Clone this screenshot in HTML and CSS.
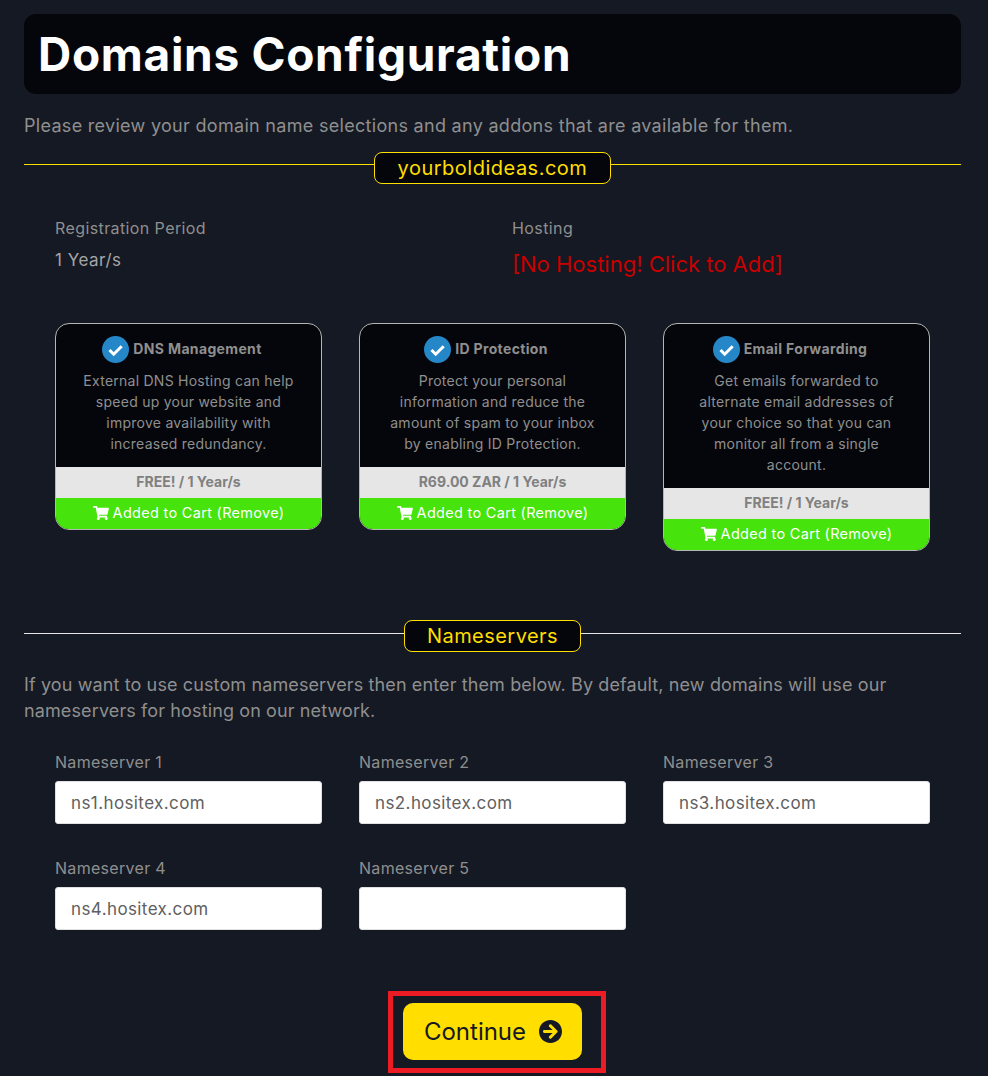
FILE: index.html
```html
<!DOCTYPE html>
<html lang="en">
<head>
    <meta charset="UTF-8">
    <meta name="viewport" content="width=device-width, initial-scale=1.0">
    <title>Domains Configuration</title>
    <link rel="stylesheet" href="styles.css">
</head>
<body>

<div class="container">
    <div class="page-header">
        <h1>Domains Configuration</h1>
    </div>
    <p class="intro">Please review your domain name selections and any addons that are available for them.</p>

    <div class="divider">
        <span class="divider-line"></span>
        <span class="divider-pill">yourboldideas.com</span>
        <span class="divider-line"></span>
    </div>

    <div class="domain-info">
        <div>
            <div class="info-label">Registration Period</div>
            <div class="info-value">1 Year/s</div>
        </div>
        <div>
            <div class="info-label">Hosting</div>
            <a class="no-hosting" href="#">[No Hosting! Click to Add]</a>
        </div>
    </div>

    <div class="addons">
        <div class="addon">
            <div class="addon-body">
                <div class="addon-title">
                    <svg class="check-icon" viewBox="0 0 27 27"><circle cx="13.5" cy="13.5" r="13.5"/><path d="M7.5 14l4.2 4.2 8-8"/></svg>
                    DNS Management
                </div>
                <p>External DNS Hosting can help speed up your website and improve availability with increased redundancy.</p>
            </div>
            <div class="addon-price">FREE! / 1 Year/s</div>
            <a class="addon-btn" href="#">
                <svg class="cart-icon" viewBox="0 0 576 512"><path d="M528.12 301.319l47.273-208C578.806 78.301 567.391 64 551.99 64H159.208l-9.166-44.81C147.758 8.021 137.93 0 126.529 0H24C10.745 0 0 10.745 0 24v16c0 13.255 10.745 24 24 24h69.883l70.248 343.435C147.325 417.1 136 435.222 136 456c0 30.928 25.072 56 56 56s56-25.072 56-56c0-15.674-6.447-29.835-16.824-40h209.647C430.447 426.165 424 440.326 424 456c0 30.928 25.072 56 56 56s56-25.072 56-56c0-22.172-12.888-41.332-31.579-50.405l5.517-24.276c3.413-15.018-8.002-29.319-23.403-29.319H218.117l-6.545-32h293.145c11.206 0 20.92-7.754 23.403-18.681z"/></svg>
                Added to Cart (Remove)
            </a>
        </div>
        <div class="addon">
            <div class="addon-body">
                <div class="addon-title">
                    <svg class="check-icon" viewBox="0 0 27 27"><circle cx="13.5" cy="13.5" r="13.5"/><path d="M7.5 14l4.2 4.2 8-8"/></svg>
                    ID Protection
                </div>
                <p>Protect your personal information and reduce the amount of spam to your inbox by enabling ID Protection.</p>
            </div>
            <div class="addon-price">R69.00 ZAR / 1 Year/s</div>
            <a class="addon-btn" href="#">
                <svg class="cart-icon" viewBox="0 0 576 512"><path d="M528.12 301.319l47.273-208C578.806 78.301 567.391 64 551.99 64H159.208l-9.166-44.81C147.758 8.021 137.93 0 126.529 0H24C10.745 0 0 10.745 0 24v16c0 13.255 10.745 24 24 24h69.883l70.248 343.435C147.325 417.1 136 435.222 136 456c0 30.928 25.072 56 56 56s56-25.072 56-56c0-15.674-6.447-29.835-16.824-40h209.647C430.447 426.165 424 440.326 424 456c0 30.928 25.072 56 56 56s56-25.072 56-56c0-22.172-12.888-41.332-31.579-50.405l5.517-24.276c3.413-15.018-8.002-29.319-23.403-29.319H218.117l-6.545-32h293.145c11.206 0 20.92-7.754 23.403-18.681z"/></svg>
                Added to Cart (Remove)
            </a>
        </div>
        <div class="addon">
            <div class="addon-body">
                <div class="addon-title">
                    <svg class="check-icon" viewBox="0 0 27 27"><circle cx="13.5" cy="13.5" r="13.5"/><path d="M7.5 14l4.2 4.2 8-8"/></svg>
                    Email Forwarding
                </div>
                <p>Get emails forwarded to alternate email addresses of your choice so that you can monitor all from a single account.</p>
            </div>
            <div class="addon-price">FREE! / 1 Year/s</div>
            <a class="addon-btn" href="#">
                <svg class="cart-icon" viewBox="0 0 576 512"><path d="M528.12 301.319l47.273-208C578.806 78.301 567.391 64 551.99 64H159.208l-9.166-44.81C147.758 8.021 137.93 0 126.529 0H24C10.745 0 0 10.745 0 24v16c0 13.255 10.745 24 24 24h69.883l70.248 343.435C147.325 417.1 136 435.222 136 456c0 30.928 25.072 56 56 56s56-25.072 56-56c0-15.674-6.447-29.835-16.824-40h209.647C430.447 426.165 424 440.326 424 456c0 30.928 25.072 56 56 56s56-25.072 56-56c0-22.172-12.888-41.332-31.579-50.405l5.517-24.276c3.413-15.018-8.002-29.319-23.403-29.319H218.117l-6.545-32h293.145c11.206 0 20.92-7.754 23.403-18.681z"/></svg>
                Added to Cart (Remove)
            </a>
        </div>
    </div>

    <div class="divider divider-ns">
        <span class="divider-line"></span>
        <span class="divider-pill">Nameservers</span>
        <span class="divider-line"></span>
    </div>
    <p class="ns-intro">If you want to use custom nameservers then enter them below. By default, new domains will use our nameservers for hosting on our network.</p>

    <div class="ns-grid">
        <div class="ns-field">
            <label for="ns1">Nameserver 1</label>
            <input type="text" id="ns1" value="ns1.hositex.com">
        </div>
        <div class="ns-field">
            <label for="ns2">Nameserver 2</label>
            <input type="text" id="ns2" value="ns2.hositex.com">
        </div>
        <div class="ns-field">
            <label for="ns3">Nameserver 3</label>
            <input type="text" id="ns3" value="ns3.hositex.com">
        </div>
        <div class="ns-field">
            <label for="ns4">Nameserver 4</label>
            <input type="text" id="ns4" value="ns4.hositex.com">
        </div>
        <div class="ns-field">
            <label for="ns5">Nameserver 5</label>
            <input type="text" id="ns5">
        </div>
    </div>

    <div class="actions">
        <div class="highlight">
            <button class="continue-btn">
                Continue
                <svg class="arrow-icon" viewBox="8 8 496 496"><path d="M256 8c137 0 248 111 248 248S393 504 256 504 8 393 8 256 119 8 256 8zm-28.900 143.600l75.500 72.400H120c-13.300 0-24 10.700-24 24v16c0 13.300 10.700 24 24 24h182.600l-75.500 72.400c-9.700 9.300-9.900 24.800-.4 34.300l11 10.900c9.400 9.400 24.600 9.400 33.900 0L404.300 273c9.400-9.400 9.400-24.600 0-33.900L271.600 106.300c-9.400-9.400-24.600-9.400-33.900 0l-11 10.900c-9.500 9.600-9.300 25.100.4 34.400z"/></svg>
            </button>
        </div>
    </div>
</div>

</body>
</html>
```

FILE: styles.css
```css
* {
    box-sizing: border-box;
}
html, body {
    height: 1076px;
    overflow: hidden;
}
body {
    margin: 0;
    font-family: Inter, "Noto Sans", sans-serif;
    background-color: #151923;
    color: #8f8f8f;
}
.container {
    width: 937px;
    margin-left: 24px;
    padding-top: 14px;
}
.page-header {
    height: 80px;
    background-color: #05060b;
    border-radius: 12px;
    padding: 0 14px;
    display: flex;
    align-items: center;
}
h1 {
    margin: 0;
    font-size: 46px;
    font-weight: 700;
    letter-spacing: .7px;
    color: white;
}
.intro {
    margin: 21px 0 0;
    font-size: 18px;
    line-height: 22px;
    letter-spacing: .3px;
}

/* section dividers */
.divider {
    display: flex;
    align-items: flex-start;
    margin-top: 15px;
}
.divider-line {
    flex: 1;
    height: 1px;
    margin-top: 12px;
    background-color: #ffde00;
}
.divider-pill {
    height: 32px;
    padding: 0 22px;
    display: flex;
    align-items: center;
    font-size: 20px;
    letter-spacing: .45px;
    color: #ffde00;
    background-color: #05060b;
    border: 1px solid #ffde00;
    border-radius: 8px;
}
.divider:not(.divider-ns) .divider-pill {
    padding: 0 23px;
    letter-spacing: .5px;
}
.divider-ns {
    margin-top: 69px;
}
.divider-ns .divider-line {
    margin-top: 13px;
    background-color: #e6e6e6;
}

/* registration + hosting */
.domain-info {
    display: grid;
    grid-template-columns: 457px 1fr;
    padding: 0 31px;
    margin-top: 32px;
}
.info-label {
    font-size: 16px;
    line-height: 24px;
    letter-spacing: .4px;
}
.info-value {
    margin-top: 8px;
    font-size: 17px;
    line-height: 24px;
    letter-spacing: .5px;
    color: #a5a5a5;
}
.no-hosting {
    display: block;
    margin-top: 8px;
    font-size: 22px;
    line-height: 32px;
    color: #c80000;
    text-decoration: none;
}

/* addon cards */
.addons {
    display: grid;
    grid-template-columns: repeat(3, 267px);
    column-gap: 37px;
    align-items: start;
    padding: 0 31px;
    margin-top: 43px;
}
.addon {
    border: 1px solid #b5b5b5;
    border-radius: 14px;
    overflow: hidden;
    background-color: #05060b;
}
.addon-body {
    padding: 12px 21px 13px;
    text-align: center;
}
.addon-title {
    display: flex;
    justify-content: center;
    align-items: flex-start;
    gap: 4px;
    height: 27px;
    padding-right: 13px;
    font-size: 14px;
    font-weight: 700;
    line-height: 25px;
    letter-spacing: .35px;
}
.check-icon {
    width: 27px;
    height: 27px;
    flex-shrink: 0;
}
.check-icon circle {
    fill: #2587c8;
}
.check-icon path {
    fill: none;
    stroke: white;
    stroke-width: 3;
}
.addon-body p {
    margin: 7px 0 0;
    font-size: 14px;
    line-height: 21px;
    letter-spacing: .25px;
}
.addon-price {
    height: 31px;
    line-height: 30px;
    text-align: center;
    font-size: 14px;
    font-weight: 700;
    color: #808080;
    background-color: #e6e6e6;
}
.addon-btn {
    height: 31px;
    display: flex;
    justify-content: center;
    align-items: center;
    gap: 4px;
    padding-bottom: 2px;
    font-size: 14.5px;
    letter-spacing: .3px;
    color: white;
    background-color: #46e30c;
    text-decoration: none;
}
.cart-icon {
    width: 16px;
    height: 14px;
    fill: white;
}

/* nameservers */
.ns-intro {
    margin: 20px 0 0;
    font-size: 18px;
    line-height: 26px;
    letter-spacing: .12px;
}
.ns-grid {
    display: grid;
    grid-template-columns: repeat(3, 267px);
    column-gap: 37px;
    row-gap: 31px;
    padding: 0 31px;
    margin-top: 25px;
}
.ns-field label {
    display: block;
    height: 32px;
    line-height: 26px;
    font-size: 16px;
    letter-spacing: .3px;
}
.ns-field input {
    display: block;
    width: 100%;
    height: 43px;
    padding: 0 15px;
    font-family: inherit;
    font-size: 17px;
    letter-spacing: .4px;
    color: #606060;
    background-color: white;
    border: 1px solid #e0e0e0;
    border-radius: 3px;
}

/* continue */
.actions {
    display: flex;
    justify-content: center;
    padding-left: 8px;
    margin-top: 61px;
}
.highlight {
    padding: 7px 19px 8px 10px;
    border: 5px solid #ed1c24;
}
.continue-btn {
    width: 179px;
    height: 57px;
    display: flex;
    justify-content: center;
    align-items: center;
    gap: 13px;
    padding: 0 0 0 2px;
    font-family: inherit;
    font-size: 24px;
    color: #151923;
    background-color: #ffde00;
    border: none;
    border-radius: 10px;
    cursor: pointer;
}
.arrow-icon {
    width: 23px;
    height: 23px;
    fill: #151923;
}
```
